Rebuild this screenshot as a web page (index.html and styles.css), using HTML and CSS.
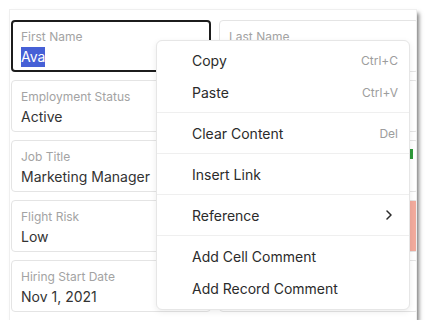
FILE: index.html
```html
<!DOCTYPE html>
<html>
<head>
<meta charset="utf-8">
<link rel="stylesheet" href="styles.css">
</head>
<body>
<div class="panel">
  <div class="grid">
    <div class="field focused">
      <div class="label">First Name</div>
      <div class="value"><span class="sel">Ava</span></div>
    </div>
    <div class="field">
      <div class="label">Last Name</div>
    </div>
    <div class="field">
      <div class="label">Employment Status</div>
      <div class="value">Active</div>
    </div>
    <div class="field"></div>
    <div class="field">
      <div class="label">Job Title</div>
      <div class="value">Marketing Manager</div>
    </div>
    <div class="field row">
      <div class="col"></div>
      <div class="green-mark"></div>
    </div>
    <div class="field">
      <div class="label">Flight Risk</div>
      <div class="value">Low</div>
    </div>
    <div class="field row">
      <div class="col"></div>
      <div class="salmon"></div>
    </div>
    <div class="field">
      <div class="label">Hiring Start Date</div>
      <div class="value">Nov 1, 2021</div>
    </div>
    <div class="field"></div>
  </div>

  <div class="menu">
    <div class="item"><span>Copy</span><span class="key">Ctrl+C</span></div>
    <div class="item"><span>Paste</span><span class="key">Ctrl+V</span></div>
    <div class="sep"></div>
    <div class="item"><span>Clear Content</span><span class="key">Del</span></div>
    <div class="sep"></div>
    <div class="item"><span>Insert Link</span></div>
    <div class="sep"></div>
    <div class="item"><span>Reference</span>
      <svg class="chev" width="6" height="10" viewBox="0 0 6 10"><path d="M1 1 L5 5 L1 9" fill="none" stroke="#2b2b2b" stroke-width="1.5" stroke-linecap="round" stroke-linejoin="round"/></svg>
    </div>
    <div class="sep"></div>
    <div class="item"><span>Add Cell Comment</span></div>
    <div class="item"><span>Add Record Comment</span></div>
  </div>
</div>
</body>
</html>
```

FILE: styles.css
```css
html, body {
  margin: 0;
  padding: 0;
  background: #ffffff;
}
body {
  font-family: Inter, "Noto Sans", sans-serif;
  color: #333333;
}
.panel {
  position: relative;
  margin: 10px 0 0 10px;
  width: 406px;
  height: 310px;
  box-sizing: border-box;
  background: #ffffff;
  overflow: hidden;
  box-shadow: 0 0 0 1px #efefef, 3px 3px 4px rgba(0, 0, 0, 0.5);
  padding: 10px 0 0 1px;
}
.grid {
  display: grid;
  grid-template-columns: 200px 200px;
  grid-auto-rows: 52px;
  column-gap: 8px;
  row-gap: 8px;
}
.field {
  box-sizing: border-box;
  border: 1px solid #e4e4e4;
  border-radius: 4px;
  padding: 8px 9px 0 9px;
  overflow: hidden;
}
.field.focused {
  border: 2px solid #1c1c1c;
  padding: 7px 8px 0 8px;
}
.field.row {
  display: flex;
  padding-right: 0;
}
.col {
  flex: 1;
}
.green-mark {
  width: 3px;
  height: 10px;
  margin-right: 5px;
  background: #2f9a3a;
  align-self: flex-start;
}
.salmon {
  width: 9px;
  margin: -8px 0 0 0;
  height: 52px;
  background: #f2ab9d;
}
.label {
  font-size: 12px;
  line-height: 16px;
  color: #a3a3a3;
  white-space: nowrap;
}
.value {
  margin-top: 2px;
  font-size: 14px;
  line-height: 20px;
  color: #333333;
  white-space: nowrap;
}
.sel {
  background: #4660d6;
  color: #ffffff;
  display: inline-block;
}
.menu {
  position: absolute;
  left: 146px;
  top: 30px;
  width: 254px;
  box-sizing: border-box;
  background: #ffffff;
  border: 1px solid #e6e6e6;
  border-radius: 6px;
  padding: 3px 0 5px;
  box-shadow: 0 2px 6px rgba(0, 0, 0, 0.08);
}
.item {
  display: flex;
  align-items: center;
  justify-content: space-between;
  height: 32px;
  padding: 0 11px 0 35px;
  font-size: 14px;
  color: #2b2b2b;
  white-space: nowrap;
}
.key {
  font-size: 12px;
  color: #9d9d9d;
}
.chev {
  margin-right: 6px;
}
.sep {
  height: 1px;
  background: #efefef;
  margin: 4px 0;
}
```
